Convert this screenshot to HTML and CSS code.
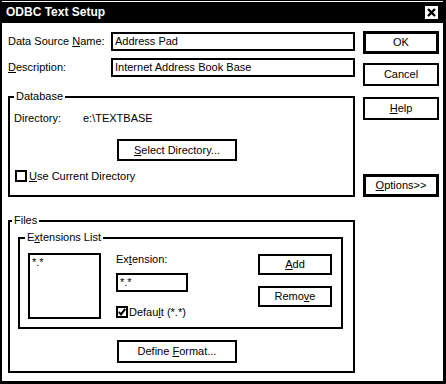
FILE: index.html
```html
<!DOCTYPE html>
<html lang="en">
<head>
    <meta charset="UTF-8">
    <title>ODBC Text Setup</title>
    <link rel="stylesheet" href="styles.css">
</head>
<body>
    <div class="window">
        <div class="title-bar">
            <span class="title">ODBC Text Setup</span>
            <span class="close-box">
                <svg width="9" height="9" viewBox="0 0 9 9">
                    <path d="M1 1 L8 8 M8 1 L1 8" stroke="#000" stroke-width="2.4" />
                </svg>
            </span>
        </div>

        <div class="main">
            <div class="left-col">
                <div class="field-row first">
                    <span class="field-label">Data Source <u>N</u>ame:</span>
                    <div class="text-field wide">Address Pad</div>
                </div>
                <div class="field-row">
                    <span class="field-label"><u>D</u>escription:</span>
                    <div class="text-field wide">Internet Address Book Base</div>
                </div>

                <!-- Database group -->
                <fieldset class="group database">
                    <legend>Database</legend>
                    <div class="dir-row">
                        <span class="dir-label">Directory:</span>
                        <span>e:\TEXTBASE</span>
                    </div>
                    <button class="btn select-dir"><span><u>S</u>elect Directory...</span></button>
                    <div class="check-row use-current">
                        <span class="checkbox"></span>
                        <span><u>U</u>se Current Directory</span>
                    </div>
                </fieldset>

                <!-- Files group -->
                <fieldset class="group files">
                    <legend>Files</legend>
                    <fieldset class="group extensions">
                        <legend>E<u>x</u>tensions List</legend>
                        <div class="ext-body">
                            <div class="list-box">*.*</div>
                            <div class="ext-middle">
                                <span class="ext-label">Ex<u>t</u>ension:</span>
                                <div class="text-field ext-field">*.*</div>
                                <div class="check-row default-row">
                                    <span class="checkbox">
                                        <svg width="8" height="8" viewBox="0 0 8 8">
                                            <path d="M0.8 3.8 L3 6.4 L7.3 0.8" fill="none" stroke="#000" stroke-width="2" />
                                        </svg>
                                    </span>
                                    <span>Defau<u>l</u>t (*.*)</span>
                                </div>
                            </div>
                            <div class="ext-buttons">
                                <button class="btn small"><span><u>A</u>dd</span></button>
                                <button class="btn small remove"><span>Remo<u>v</u>e</span></button>
                            </div>
                        </div>
                    </fieldset>
                    <button class="btn define-format"><span>Define <u>F</u>ormat...</span></button>
                </fieldset>
            </div>

            <div class="right-col">
                <button class="btn side default ok"><span>OK</span></button>
                <button class="btn side cancel"><span>Cancel</span></button>
                <button class="btn side help"><span><u>H</u>elp</span></button>
                <button class="btn side default options"><span><u>O</u>ptions&gt;&gt;</span></button>
            </div>
        </div>
    </div>
</body>
</html>
```

FILE: styles.css
```css
* {
    margin: 0;
    padding: 0;
    box-sizing: border-box;
}

body {
    width: 446px;
    height: 384px;
    overflow: hidden;
    background: #fff;
    color: #000;
    font-family: 'Liberation Sans', Arial, sans-serif;
    font-size: 11px;
    line-height: 13px;
}

u {
    text-decoration: underline;
    text-underline-offset: 1px;
}

.window {
    width: 446px;
    height: 384px;
    border-style: solid;
    border-color: #000;
    border-width: 1px 3px 3px 2px;
    padding-top: 1px;
}

.title-bar {
    height: 21px;
    background: #000;
    display: flex;
    align-items: center;
    justify-content: space-between;
    padding: 0 5px 0 4px;
}

.title {
    color: #fff;
    font-size: 12px;
    font-weight: bold;
}

.close-box {
    width: 13px;
    height: 13px;
    background: #fff;
    display: flex;
    align-items: center;
    justify-content: center;
}

.close-box svg {
    display: block;
}

.main {
    display: flex;
    padding-left: 6px;
    gap: 8px;
}

.left-col {
    width: 347px;
}

.right-col {
    width: 76px;
    display: flex;
    flex-direction: column;
}

.field-row {
    display: flex;
    align-items: center;
    height: 19px;
    margin-top: 7px;
}

.field-row.first {
    margin-top: 9px;
}

.field-label {
    width: 103px;
}

.text-field {
    border: 2px solid #000;
    height: 19px;
    padding-left: 2px;
    display: flex;
    align-items: center;
    white-space: nowrap;
}

.text-field.wide {
    width: 244px;
}

.group {
    border: 2px solid #000;
    min-inline-size: 0;
}

.group legend {
    padding: 0 2px;
    line-height: 13px;
}

.database {
    margin-top: 13px;
    padding: 9px 4px 13px 4px;
}

.dir-row {
    display: flex;
}

.dir-label {
    width: 69px;
}

.btn {
    display: flex;
    align-items: center;
    justify-content: center;
    background: #fff;
    border: 2px solid #000;
    font-family: inherit;
    font-size: 11px;
    color: #000;
    line-height: 13px;
    white-space: nowrap;
}

.btn.default {
    border-width: 3px;
}

.select-dir {
    width: 120px;
    height: 22px;
    margin: 14px 0 0 103px;
}

.check-row {
    display: flex;
    align-items: center;
    height: 12px;
    gap: 2px;
}

.use-current {
    margin: 9px 0 0 1px;
}

.checkbox {
    width: 12px;
    height: 12px;
    border: 2px solid #000;
    display: flex;
    align-items: center;
    justify-content: center;
}

.checkbox svg {
    display: block;
}

.files {
    margin-top: 17px;
    padding: 4px 10px 8px 2px;
}

.extensions {
    margin-left: 6px;
    padding: 9px 9px 8px 5px;
}

.ext-body {
    display: flex;
    align-items: flex-start;
}

.list-box {
    width: 73px;
    height: 66px;
    margin-left: 3px;
    border: 2px solid #000;
    padding: 1px 0 0 2px;
}

.ext-middle {
    width: 72px;
    margin-left: 15px;
    display: flex;
    flex-direction: column;
}

.ext-field {
    width: 72px;
    margin-top: 7px;
}

.default-row {
    margin-top: 14px;
    gap: 1px;
}

.ext-buttons {
    margin-left: 70px;
    margin-top: 1px;
    display: flex;
    flex-direction: column;
}

.btn.small {
    width: 74px;
    height: 21px;
}

.btn.remove {
    margin-top: 11px;
}

.define-format {
    width: 120px;
    height: 23px;
    margin: 11px 0 0 105px;
}

.btn.side {
    width: 76px;
    height: 23px;
}

.ok {
    margin-top: 8px;
    height: 21px;
}

.cancel {
    margin-top: 9px;
}

.help {
    margin-top: 11px;
}

.options {
    margin-top: 54px;
}
```
